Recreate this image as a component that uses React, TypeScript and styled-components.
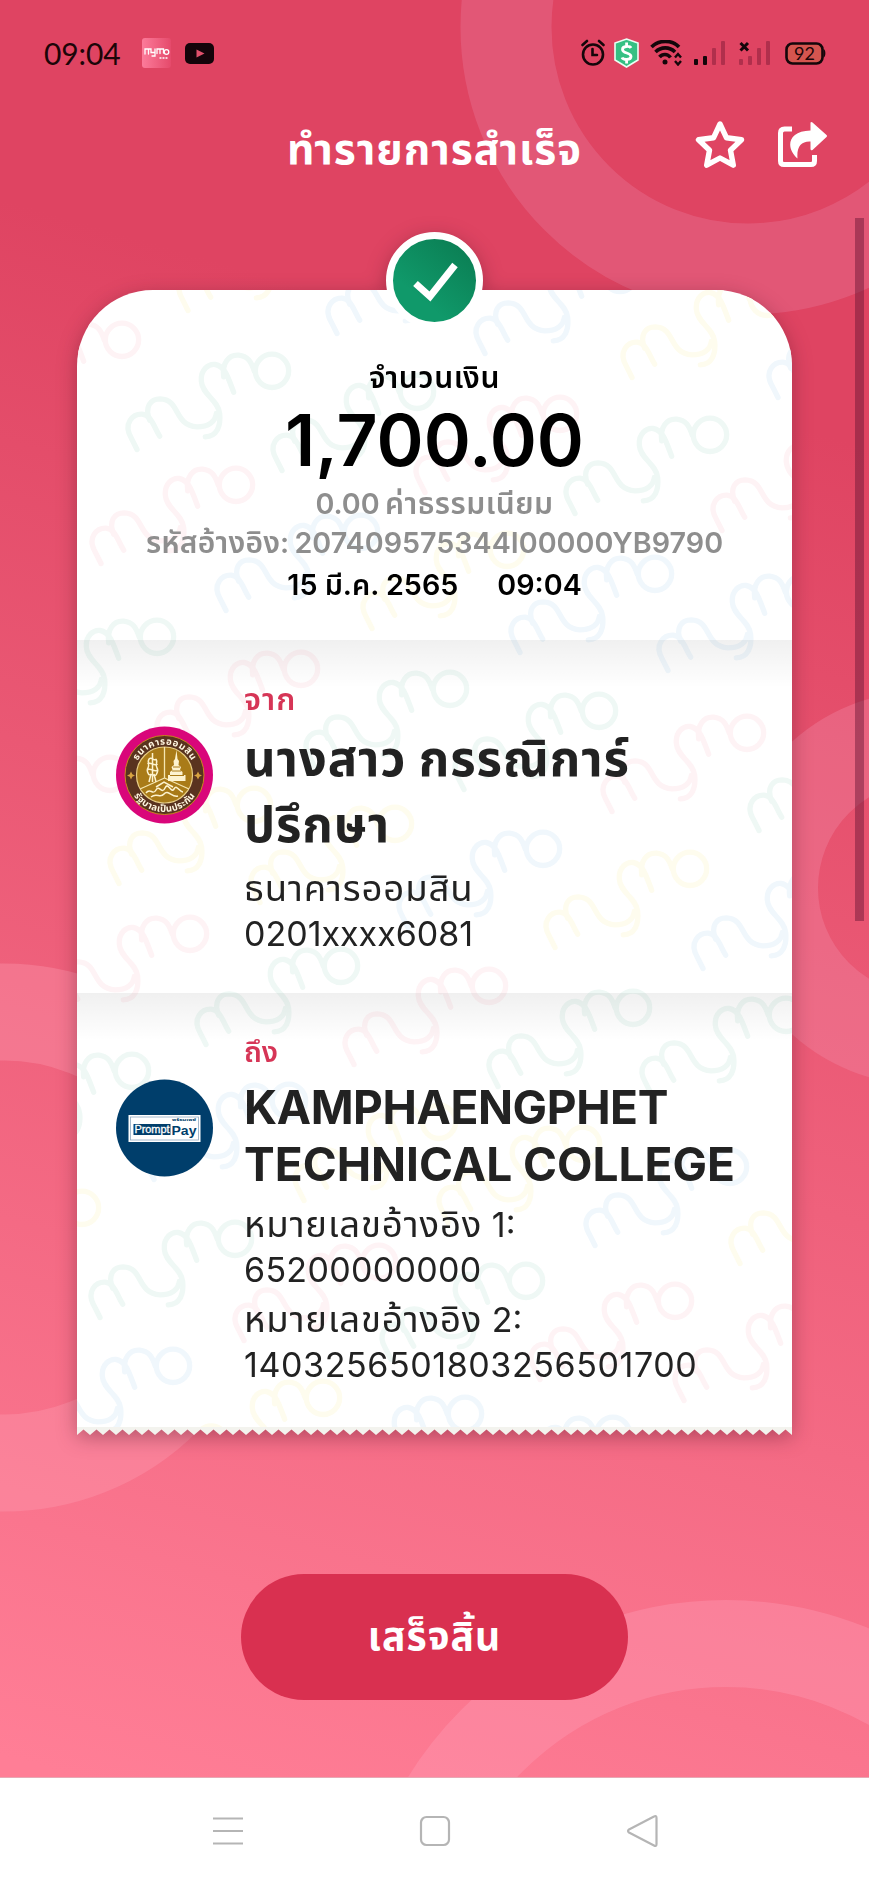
import React from "react";
import styled, { createGlobalStyle } from "styled-components";

const GlobalStyle = createGlobalStyle`
  * { box-sizing: border-box; }
  body { margin: 0; background: #fff; }
`;

const fontStack = `Inter, "Noto Sans Thai", "Noto Sans", sans-serif`;

const Screen = styled.div`
  position: relative;
  width: 869px;
  height: 1883px;
  display: flex;
  flex-direction: column;
  overflow: hidden;
  font-family: ${fontStack};
  background: linear-gradient(196deg, #df4462 21%, #ff7e96 94%);
`;

const Backdrop = styled.svg`
  position: absolute;
  inset: 0;
`;

const StatusBar = styled.div`
  position: relative;
  height: 106px;
  padding: 0 43px 0 44px;
  display: flex;
  justify-content: space-between;
  align-items: center;
  svg { display: block; }
`;

const StatusGroup = styled.div`
  display: flex;
  align-items: center;
`;

const Clock = styled.span`
  width: 98px;
  font: 400 30px/36px Lato, sans-serif;
  letter-spacing: -0.1px;
  color: #1c0508;
`;

const Spacer = styled.span<{ $w: number }>`
  width: ${(p) => p.$w}px;
`;

const Header = styled.header`
  position: relative;
  height: 92px;
  display: grid;
  grid-template-columns: 1fr auto 1fr;
  align-items: center;
`;

const Title = styled.h1`
  grid-column: 2;
  margin: 0 0 4px;
  font-size: 36px;
  line-height: 50px;
  font-weight: 700;
  color: #fff;
`;

const HeaderActions = styled.div`
  display: flex;
  justify-content: flex-end;
  gap: 30px;
  padding: 0 42px 14px 0;
  svg { display: block; }
`;

const Slip = styled.main`
  position: relative;
  width: 715px;
  margin: 91.5px auto 0;
  filter: drop-shadow(0 5px 10px rgba(70, 10, 30, 0.36));
`;

const Paper = styled.div`
  position: relative;
  height: 1137px;
  border-radius: 76px 76px 0 0;
  background: #fff;
  overflow: hidden;
`;

const Watermark = styled.svg`
  position: absolute;
  left: 0;
  top: 0;
`;

const Teeth = styled.svg`
  display: block;
`;

const Badge = styled.div`
  position: absolute;
  left: 50%;
  top: -57.5px;
  width: 97px;
  height: 97px;
  margin-left: -48.5px;
  border-radius: 50%;
  border: 7.5px solid #fff;
  background: linear-gradient(220deg, #0a7a50, #10996a 70%);
  display: grid;
  place-items: center;
`;

const Summary = styled.section`
  position: relative;
  height: 350.5px;
  padding-top: 67.5px;
  text-align: center;
  font-weight: 640;
`;

const SummaryLine = styled.div<{ $h: number; $size?: number; $muted?: boolean }>`
  height: ${(p) => p.$h}px;
  line-height: ${(p) => p.$h}px;
  font-size: ${(p) => p.$size ?? 28.7}px;
  color: ${(p) => (p.$muted ? "#8e8e8e" : "#000")};
  white-space: pre;
`;

const Time = styled.span`
  margin-left: 39px;
`;

const Party = styled.section<{ $h: number }>`
  position: relative;
  height: ${(p) => p.$h}px;
  padding: 0 0 0 39px;
  display: flex;
  gap: 31px;
  background: linear-gradient(rgba(0, 0, 0, 0.06), rgba(0, 0, 0, 0) 48px);
`;

const Avatar = styled.svg`
  flex: none;
  margin-top: 86px;
`;

const PartyText = styled.div`
  padding-top: 38.5px;
  color: #222;
  white-space: pre;
`;

const Direction = styled.div`
  height: 40px;
  line-height: 40px;
  font-size: 28px;
  font-weight: 600;
  color: #d63556;
`;

const Name = styled.h2<{ $lh: number }>`
  margin: 7px 0 8px;
  font-size: 46px;
  line-height: ${(p) => p.$lh}px;
  font-weight: 700;
  letter-spacing: -0.4px;
`;

const Detail = styled.p`
  margin: 0 0 5px;
  font-size: 34px;
  line-height: 45px;
`;

const Tracked = styled.span<{ $ls: number }>`
  letter-spacing: ${(p) => p.$ls}px;
`;

const Thai = styled.span<{ $size?: number; $ls?: number }>`
  font-size: ${(p) => (p.$size ? p.$size + "px" : "inherit")};
  letter-spacing: ${(p) => p.$ls ?? 0}px;
`;

const DoneButton = styled.button`
  position: relative;
  width: 387px;
  height: 126px;
  margin: 139px auto 0;
  border: 0;
  border-radius: 63px;
  background: #d93050;
  color: #fff;
  font: 700 33px/44px ${fontStack};
`;

const NavBar = styled.nav`
  position: relative;
  height: 106px;
  margin-top: auto;
  background: #fff;
  border-top: 1px solid #e6a9b4;
  display: flex;
  justify-content: center;
  align-items: center;
  gap: 175px;
`;

const ScrollThumb = styled.div`
  position: absolute;
  left: 855px;
  top: 218px;
  width: 8.5px;
  height: 703px;
  background: rgba(100, 20, 50, 0.45);
`;

const tints = { g: "#eff8f5", p: "#fef3f5", y: "#fefcee", b: "#f0f7fc" };
type Tint = keyof typeof tints;

const marks: [number, number, Tint][] = [
  [188, 310, "y"], [137, 449, "g"], [-13, 418, "p"], [282, 470, "g"], [101, 563, "p"], [226, 610, "b"],
  [372, 628, "y"], [337, 333, "b"], [485, 353, "b"], [632, 377, "y"], [778, 397, "b"],
  [575, 513, "g"], [722, 530, "p"], [425, 492, "p"], [520, 652, "b"], [668, 670, "b"],
  [22, 715, "g"], [166, 747, "p"], [315, 767, "g"], [464, 789, "g"], [612, 811, "p"],
  [-25, 852, "p"], [119, 883, "y"], [260, 902, "y"], [408, 927, "b"], [555, 947, "y"],
  [759, 830, "g"], [703, 968, "b"], [55, 1012, "p"], [206, 1044, "g"], [354, 1064, "p"],
  [498, 1086, "g"], [651, 1093, "g"], [-3, 1149, "g"], [154, 1179, "b"], [304, 1200, "y"],
  [448, 1222, "y"], [595, 1245, "b"], [740, 1263, "y"], [-53, 1286, "y"], [100, 1317, "g"],
  [244, 1340, "p"], [391, 1359, "g"], [540, 1379, "p"], [684, 1400, "p"], [38, 1444, "b"],
  [188, 1476, "y"], [330, 1492, "b"], [478, 1512, "b"], [626, 1530, "y"],
];

const Script = () => (
  <g fill="none" strokeWidth={16} strokeLinecap="round" strokeLinejoin="round">
    <path d="M0 0L-16-32C-45-80-10-107 15-106C42-104 50-70 68-40" />
    <path d="M38-88C22-128 40-152 70-152C130-150 110-72 180-68C215-68 236-85 238-108" />
    <path d="M205-38C240-40 252-70 248-108C243-150 195-165 193-205C190-240 215-258 235-255C265-250 275-210 290-172" />
    <path d="M260-218C255-260 275-285 305-283C332-280 342-265 352-235" />
    <circle cx={405} cy={-236} r={50} />
  </g>
);

const Rings = () => (
  <Backdrop width="869" height="1883" viewBox="0 0 869 1883" fill="none">
    <circle cx="748" cy="27" r="242" stroke="#e8799a" strokeOpacity=".36" strokeWidth="91" />
    <circle cx="924" cy="888" r="151.5" stroke="#f08ba6" strokeOpacity=".36" strokeWidth="91" />
    <circle cx="4" cy="1237.5" r="225.5" stroke="#ffa5b8" strokeOpacity=".3" strokeWidth="97" />
    <circle cx="726" cy="1974" r="330.5" stroke="#ff9fb8" strokeOpacity=".36" strokeWidth="87" />
  </Backdrop>
);

const Bars = ({ on, none }: { on: number; none?: boolean }) => (
  <svg width="32" height="26" viewBox="0 0 32 26">
    {[7, 9, 17, 24].map((h, i) => (
      <rect key={i} x={i * 9} y={25 - h + (i === 0 ? 1 : 0)} width="4" height={i === 0 ? 6 : h} rx="1"
        fill={i < on ? "#14060a" : "#b02f4c"} />
    ))}
    {none && <path d="M1.500 3L9 10.500M9 3L1.500 10.500" stroke="#14060a" strokeWidth="3" />}
  </svg>
);

const StatusIcons = () => (
  <StatusGroup>
    <svg width="24" height="28" viewBox="0 0 24 28" fill="none" stroke="#14060a" strokeWidth="2.600">
      <circle cx="12" cy="15.500" r="10" />
      <path d="M11.500 10v6h4.500M1.500 6L6 2M22.500 6L18 2" strokeLinecap="round" />
    </svg>
    <Spacer $w={9} />
    <svg width="25" height="30" viewBox="0 0 25 30" fill="none">
      <path d="M12.500 1L24 5v17l-11.500 7L1 22V5z" fill="#35c083" stroke="#e9fff4" strokeWidth="1.600" />
      <path d="M17 10c-1-2-8.500-2.500-8.500 1.500 0 4.500 8.500 2.500 8.500 7 0 4-8 3.500-9 1M12.600 4.500v4M12.600 22v3.500" stroke="#fff" strokeWidth="2.800" />
    </svg>
    <Spacer $w={11} />
    <svg width="34" height="26" viewBox="0 0 34 26" fill="none" stroke="#14060a" strokeWidth="3.600">
      <path d="M1.500 7C9-.5 22-.5 29 7M5.500 12c5.500-5.500 14-5.500 19.500 0M9.500 17c3-3.500 8-3.500 11 .5" />
      <circle cx="15" cy="22" r="2.500" fill="#14060a" stroke="none" />
      <path d="M25 17.500l3-3.500 3 3.500M25 21l3 3.500 3-3.500" strokeWidth="2.400" />
    </svg>
    <Spacer $w={10} />
    <Bars on={2} />
    <Spacer $w={13} />
    <Bars on={0} none />
    <Spacer $w={14} />
    <svg width="41" height="24" viewBox="0 0 41 24">
      <rect x="1.500" y="2.500" width="36" height="20" rx="6" fill="#d5554f" stroke="#14060a" strokeWidth="2.600" />
      <path d="M38.500 8v8.500c2.500-1 2.500-7.500 0-8.500z" fill="#14060a" />
      <text x="19.500" y="19" textAnchor="middle" fontFamily="Lato" fontSize="18" fill="#1c0508">92</text>
    </svg>
  </StatusGroup>
);

const GsbLogo = () => (
  <Avatar width="97" height="98" viewBox="0 0 97 98">
    <defs>
      <path id="arcTop" d="M18 49a30.500 30.500 0 0 1 61 0" />
      <path id="arcBottom" d="M11.500 49a37 37 0 0 0 74 0" />
    </defs>
    <circle cx="48.500" cy="49" r="48.500" fill="#d9067a" />
    <circle cx="48.500" cy="49" r="39.500" fill="#59331f" stroke="#c9871f" strokeWidth="1" />
    <circle cx="48.500" cy="49" r="28" fill="#a97b18" stroke="#e9cf86" strokeWidth="1.200" />
    <path d="M48.500 21v31M48.500 52L24 63M48.500 52l24.500 11" stroke="#f5e6b0" strokeWidth="1.300" />
    <g fill="none" stroke="#fdf3cf" strokeWidth="1.500">
      <path d="M36.500 27v29M33 33c3-3 5 3 7 0M31.500 38c3-3 7 3 10 0M31 44c4-3 7 3 11 0M33 49c3-2 5 2 7 0M33 56l2-8M40 56l-2-8M33 33c-2 3 1 6-1 9s0 5 1 7M40 33c2 3-1 6 1 9s0 5-1 7" />
      <path d="M30 67c4-6 7 3 10-3s6 5 9-2 6 6 9 1 5 3 9 3M35 71c6-5 9 2 13-3s8 4 14 2M40 61l8-5 9 5" />
    </g>
    <path d="M60.500 24l1 9 1.500 2-.5 4 2.500 2-1 3 2.500 2v3h3v6H52v-6h2v-3l2.500-2-1-3 2.500-2-.5-4 1.500-2z" fill="#fdf3cf" />
    <path d="M54 49.500h14M56 45h9M57 41h7" stroke="#a97b18" strokeWidth="1" />
    <path d="M15 45.500l1.300 2.700 2.700 1.300-2.700 1.300-1.300 2.700-1.300-2.700L11 49.500l2.700-1.300zM82 45.500l1.300 2.700 2.700 1.300-2.700 1.300-1.300 2.700-1.300-2.700-2.700-1.300 2.700-1.300z" fill="#d9a441" />
    <g fontFamily={`"Noto Sans Thai", "Noto Sans", sans-serif`} fontSize="9.500" fontWeight="700" fill="#fff6e0" textAnchor="middle">
      <text><textPath href="#arcTop" startOffset="50%" textLength="66">ธนาคารออมสิน</textPath></text>
      <text><textPath href="#arcBottom" startOffset="50%" textLength="72">รัฐบาลเป็นประกัน</textPath></text>
    </g>
  </Avatar>
);

const PromptPayLogo = () => (
  <Avatar width="97" height="98" viewBox="0 0 97 98">
    <circle cx="48.500" cy="49" r="48.500" fill="#003e6b" />
    <rect x="12.500" y="36" width="72" height="27" fill="#fff" />
    <rect x="14.500" y="38" width="68" height="23" fill="none" stroke="#8fa9c0" strokeWidth=".8" />
    <rect x="17.500" y="45" width="37" height="11" fill="#003e6b" />
    <text x="18.500" y="54.300" fontFamily="Liberation Sans" fontSize="11" fill="#fff" stroke="#fff" strokeWidth=".3" textLength="35">Prompt</text>
    <text x="55.500" y="55.500" fontFamily="Liberation Sans" fontSize="12.500" fontWeight="700" fill="#003e6b" textLength="25" lengthAdjust="spacingAndGlyphs">Pay</text>
    <text x="56" y="42.300" fontFamily={`"Noto Sans Thai", "Noto Sans", sans-serif`} fontSize="4.200" fontWeight="700" fill="#003e6b" textLength="24" lengthAdjust="spacingAndGlyphs">พร้อมเพย์</text>
  </Avatar>
);

export default function App() {
  return (
    <Screen>
      <GlobalStyle />
      <Rings />
      <StatusBar>
        <StatusGroup>
          <Clock>09:04</Clock>
          <svg width="29" height="30" viewBox="0 0 29 30">
            <defs>
              <linearGradient id="appTile" x1="0" x2="1">
                <stop offset="0" stopColor="#fc7b9a" />
                <stop offset="1" stopColor="#e54a6b" />
              </linearGradient>
            </defs>
            <rect width="29" height="30" rx="3" fill="url(#appTile)" />
            <g fill="none" stroke="#fff" strokeWidth="1.300" strokeLinecap="round">
              <path d="M3 16v-5h3.500v5M6.500 11H9v3.500h4V11M13 14.500V18h-3M15 15.500V11h3v4.500M18 11h3.500v4" />
              <circle cx="24.500" cy="14" r="2.300" />
              <path d="M18 20h1M21 20h1M24 20h1" />
            </g>
          </svg>
          <Spacer $w={14} />
          <svg width="29" height="21" viewBox="0 0 29 21">
            <rect width="29" height="21" rx="5" fill="#14040a" />
            <path d="M11.500 6.500l8 4-8 4z" fill="#e0506c" />
          </svg>
        </StatusGroup>
        <StatusIcons />
      </StatusBar>
      <Header>
        <Title><Thai $size={42.5} $ls={1}>ทำรายการสำเร็จ</Thai></Title>
        <HeaderActions>
          <svg width="52" height="50" viewBox="0 0 52 50">
            <path d="M25 4l6.500 13.800 15 2-11 10.400 2.800 15-13.300-7.200-13.300 7.200 2.800-15-11-10.400 15-2z" fill="none" stroke="#fff" strokeWidth="5.400" strokeLinejoin="round" />
          </svg>
          <svg width="50" height="50" viewBox="0 0 50 50">
            <path d="M15 9H7.500Q3.500 9 3.500 13v28q0 3.500 3.500 3.500h27q3.500 0 3.500-3.500v-6" fill="none" stroke="#fff" strokeWidth="5" />
            <path d="M33.500 2.500q1-.8 2 0L49.500 15q1 1 0 2L35.500 30q-1.800 1-2-1v-7.500C24 21 19.500 27 20.500 38.500 9 29 9.500 11 33.500 10.500z" fill="#fff" />
          </svg>
        </HeaderActions>
      </Header>
      <Slip>
        <Paper>
          <Watermark width="715" height="1137" viewBox="77 289.500 715 1137">
            {marks.map(([x, y, t], i) => (
              <g key={i} transform={`translate(${x} ${y}) scale(.3333)`} stroke={tints[t]}>
                <Script />
              </g>
            ))}
          </Watermark>
          <Summary>
            <SummaryLine $h={40}><Thai $size={30} $ls={0.6}>จำนวนเงิน</Thai></SummaryLine>
            <SummaryLine $h={87} $size={71.5}>1,700.00</SummaryLine>
            <SummaryLine $h={38} $muted>0.00<Tracked $ls={-2}> </Tracked><Thai $size={30} $ls={0.5}>ค่าธรรมเนียม</Thai></SummaryLine>
            <SummaryLine $h={41} $muted><Thai $size={30} $ls={0.2}>รหัสอ้างอิง</Thai>:<Tracked $ls={-2}> </Tracked>207409575344I00000YB9790</SummaryLine>
            <SummaryLine $h={43}>15 <Thai>มี.ค.</Thai> 2565<Time>09:04</Time></SummaryLine>
          </Summary>
          <Party $h={353}>
            <GsbLogo />
            <PartyText>
              <Direction><Thai $size={31} $ls={1}>จาก</Thai></Direction>
              <Name $lh={66}><Thai $size={49} $ls={0.9}>นางสาว กรรณิการ์{"\n"}ปรึกษา</Thai></Name>
              <Detail><Thai $size={36.5} $ls={0.9}>ธนาคารออมสิน</Thai>{"\n"}0201xxxx6081</Detail>
            </PartyText>
          </Party>
          <Party $h={433.5}>
            <PromptPayLogo />
            <PartyText>
              <Direction><Thai $size={29}>ถึง</Thai></Direction>
              <Name $lh={57.5}>KAMPHAENGPHET{"\n"}<Tracked $ls={0}>TECHNICAL COLLEGE</Tracked></Name>
              <Detail><Thai $size={36.5} $ls={0.9}>หมายเลขอ้างอิง</Thai> 1:{"\n"}<Tracked $ls={0.3}>65200000000</Tracked></Detail>
              <Detail><Thai $size={36.5} $ls={0.9}>หมายเลขอ้างอิง</Thai> 2:{"\n"}<Tracked $ls={0.6}>1403256501803256501700</Tracked></Detail>
            </PartyText>
          </Party>
        </Paper>
        <Teeth width="715" height="8" viewBox="0 0 715 8">
          <defs>
            <pattern id="zigzag" width="13" height="8" patternUnits="userSpaceOnUse">
              <path d="M0 0h13v8L6.500 2.500 0 8z" fill="#f3f3ee" />
            </pattern>
          </defs>
          <rect width="715" height="8" fill="url(#zigzag)" />
        </Teeth>
        <Badge>
          <svg width="82" height="82" viewBox="0 0 82 82">
            <path d="M21.500 43.500l14.500 13L61 25" fill="none" stroke="#fff" strokeWidth="7" />
          </svg>
        </Badge>
      </Slip>
      <DoneButton><Thai $size={39} $ls={1}>เสร็จสิ้น</Thai></DoneButton>
      <NavBar>
        <svg width="32" height="32" viewBox="0 0 32 32" stroke="#b5b5b5" strokeWidth="2.200">
          <path d="M1 3.500h30M1 16h30M1 28.500h30" />
        </svg>
        <svg width="32" height="32" viewBox="0 0 32 32" fill="none" stroke="#b5b5b5" strokeWidth="2.200">
          <rect x="2" y="2" width="28" height="28" rx="5.500" />
        </svg>
        <svg width="32" height="34" viewBox="0 0 32 34" fill="none" stroke="#b5b5b5" strokeWidth="2.200" strokeLinejoin="round">
          <path d="M28 2.500Q30.500 1 30.500 4v26q0 3-2.500 1.500L3 18.500q-2-1.500 0-3z" />
        </svg>
      </NavBar>
      <ScrollThumb />
    </Screen>
  );
}
